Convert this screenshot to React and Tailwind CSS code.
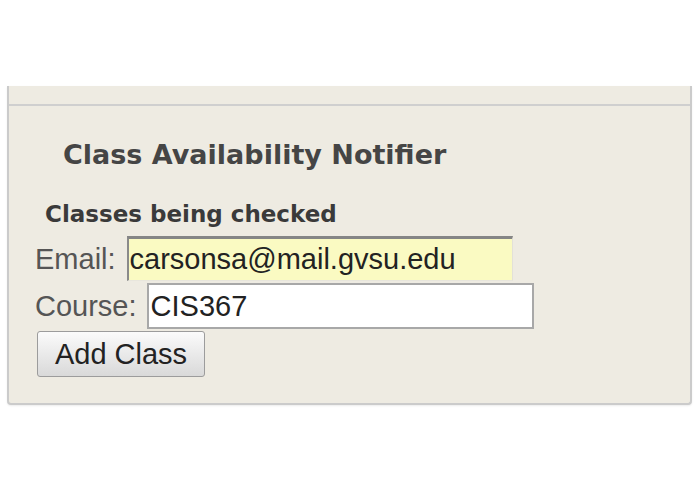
const App = () => {
  return (
    <div className="h-[494px] w-[695px] bg-white pt-[86px] font-['DejaVu_Sans',sans-serif]">
      <div className="ml-[7px] w-[685px] rounded-b-[4px] border-x-2 border-b-2 border-[#cbcbcb] bg-[#eeebe2] pb-[26px] shadow-[0_1px_2px_rgba(0,0,0,0.08)]">
        <div className="h-[20px] border-b-2 border-[#cfcfcf]"></div>

        <h2 className="mt-[33px] pl-[54px] text-[27px] font-bold leading-[32px] text-[#454545]">
          Class Availability Notifier
        </h2>

        <h3 className="mt-[29px] pl-[36px] text-[23px] font-bold leading-[28px] text-[#3a3a3a]">
          Classes being checked
        </h3>

        <div className="mt-[8px] ml-[26px] flex items-baseline font-['Liberation_Sans',Arial,sans-serif]">
          <label className="text-[29px] leading-[32px] text-[#555]">Email:</label>
          <input
            type="text"
            defaultValue="carsonsa@mail.gvsu.edu"
            className="ml-[11px] h-[45px] w-[386px] border-t-[3px] border-l-2 border-r border-b border-t-[#858585] border-l-[#8a8a8a] border-r-[#e3e1d8] border-b-[#e8e6dd] bg-[#fafac2] pl-[1px] pt-[4px] pb-[5px] text-[29px] leading-[32px] text-[#222] outline-none"
          />
        </div>

        <div className="mt-[2px] ml-[26px] flex items-baseline font-['Liberation_Sans',Arial,sans-serif]">
          <label className="text-[29px] leading-[32px] text-[#555]">Course:</label>
          <input
            type="text"
            defaultValue="CIS367"
            className="ml-[10px] h-[46px] w-[387px] border-2 border-[#a8a8a8] bg-white pl-[2px] pt-[5px] pb-[5px] text-[29px] leading-[32px] text-[#222] outline-none"
          />
        </div>

        <button className="mt-[2px] ml-[28px] flex h-[46px] w-[168px] items-center justify-center rounded-[3px] border border-[#9c9c9c] bg-gradient-to-b from-[#fbfbfb] to-[#d9d9d9] font-['Liberation_Sans',Arial,sans-serif] text-[29px] leading-[32px] text-[#222]">
          Add Class
        </button>
      </div>
    </div>
  );
};

export default App;
